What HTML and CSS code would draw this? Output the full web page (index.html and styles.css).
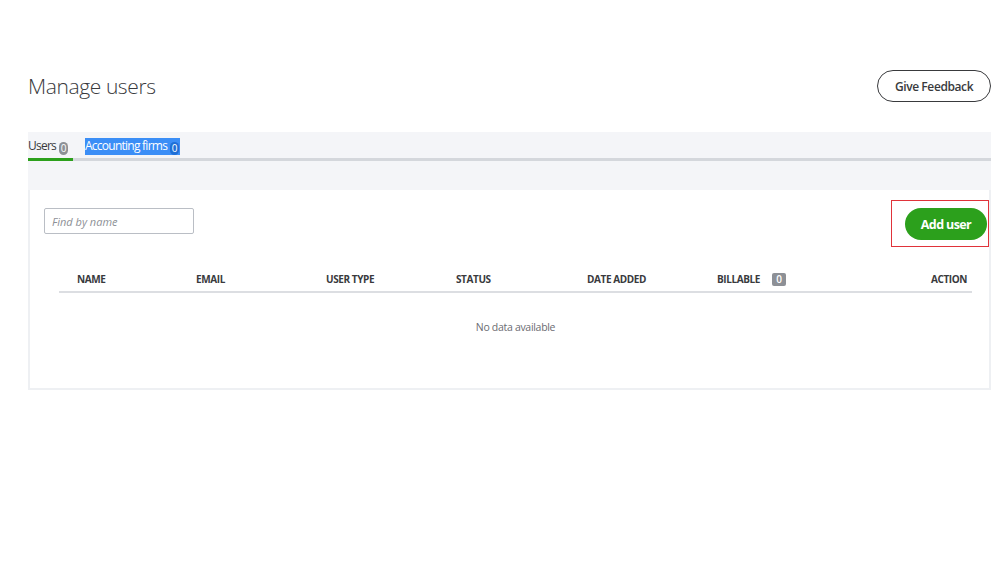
FILE: index.html
```html
<!DOCTYPE html>
<html lang="en">
<head>
    <meta charset="UTF-8">
    <title>Manage users</title>
    <link rel="stylesheet" href="styles.css">
</head>
<body>
    <div class="page">
        <div class="header">
            <h1>Manage users</h1>
            <button class="feedback-button">Give Feedback</button>
        </div>

        <div class="tab-band">
            <div class="tabs">
                <div class="tab active">Users<span class="tab-count">0</span></div>
                <div class="tab"><span class="selected">Accounting firms<span class="tab-count blue">0</span></span></div>
            </div>
        </div>

        <div class="card">
            <div class="toolbar">
                <input type="text" class="search" placeholder="Find by name">
                <div class="highlight-box">
                    <button class="add-button">Add user</button>
                </div>
            </div>

            <div class="table">
                <div class="table-head">
                    <div class="col">NAME</div>
                    <div class="col">EMAIL</div>
                    <div class="col">USER TYPE</div>
                    <div class="col">STATUS</div>
                    <div class="col">DATE ADDED</div>
                    <div class="col billable">BILLABLE <span class="count-badge">0</span><span class="col-action">ACTION</span></div>
                </div>
                <div class="empty">No data available</div>
            </div>
        </div>
    </div>
</body>
</html>
```

FILE: styles.css
```css
body {
    margin: 0;
    font-family: 'Open Sans', 'Liberation Sans', sans-serif;
    color: #393a3d;
    background-color: #ffffff;
}
.page {
    padding: 70px 8px 0 28px;
}
.header {
    display: flex;
    justify-content: space-between;
    align-items: center;
    height: 32px;
}
.header h1 {
    margin: 0;
    font-size: 21px;
    font-weight: 300;
    letter-spacing: -0.4px;
    color: #393a3d;
}
.feedback-button {
    height: 32px;
    width: 114px;
    padding: 0;
    border: 1.5px solid #393a3d;
    border-radius: 16px;
    background-color: #ffffff;
    font-family: inherit;
    font-size: 12px;
    font-weight: 600;
    letter-spacing: -0.4px;
    color: #393a3d;
}
.tab-band {
    margin-top: 30px;
    background-color: #f4f5f8;
    padding-top: 6px;
    height: 52px;
}
.tabs {
    display: flex;
    gap: 12px;
    border-bottom: 3px solid #d4d7dc;
}
.tab {
    font-size: 12px;
    line-height: 16px;
    letter-spacing: -0.75px;
    padding-bottom: 3px;
    margin-bottom: -3px;
    border-bottom: 3px solid transparent;
}
.tab.active {
    width: 45px;
    border-bottom-color: #2ca01c;
}
.tab-count {
    display: inline-block;
    margin-left: 3px;
    width: 9px;
    height: 13px;
    line-height: 13px;
    border-radius: 5px;
    background-color: #8d9096;
    color: #ffffff;
    font-size: 10px;
    text-align: center;
    vertical-align: -2px;
    letter-spacing: 0;
}
.tab-count.blue {
    background-color: #1f6fd6;
}
.selected {
    display: inline-block;
    background-color: #3b8ef6;
    color: #ffffff;
    padding-right: 1px;
}
.card {
    background-color: #ffffff;
    border: 2px solid #eef0f3;
    border-top: none;
    padding: 10px 0 28px 14px;
}
.toolbar {
    display: flex;
    justify-content: space-between;
    align-items: flex-start;
}
.search {
    margin-top: 8px;
    width: 150px;
    height: 26px;
    box-sizing: border-box;
    border: 1px solid #babec5;
    border-radius: 2px;
    padding: 0 7px;
    font-family: inherit;
    font-size: 11px;
}
.search::placeholder {
    color: #8d9096;
    font-style: italic;
}
.highlight-box {
    border: 1px solid #e0333a;
    padding: 7px 1px 6px 13px;
}
.add-button {
    display: block;
    width: 82px;
    height: 32px;
    border: none;
    border-radius: 16px;
    background-color: #2ca01c;
    color: #ffffff;
    font-family: inherit;
    font-size: 12.5px;
    font-weight: 700;
    letter-spacing: -0.6px;
}
.table {
    margin: 20px 17px 0 15px;
}
.table-head {
    display: grid;
    grid-template-columns: 119px 130px 130px 131px 130px 1fr;
    height: 24px;
    align-items: center;
    border-bottom: 2px solid #dcdee2;
    font-size: 10px;
    font-weight: 700;
    letter-spacing: -0.4px;
}
.col {
    padding-left: 18px;
}
.billable {
    display: flex;
    align-items: center;
}
.count-badge {
    display: inline-block;
    margin-left: 12px;
    width: 14px;
    height: 13px;
    line-height: 13px;
    border-radius: 2px;
    background-color: #8d9096;
    color: #ffffff;
    font-size: 10px;
    font-weight: 600;
    text-align: center;
    letter-spacing: 0;
}
.col-action {
    margin-left: auto;
    padding-right: 5px;
}
.empty {
    text-align: center;
    font-size: 10.5px;
    letter-spacing: -0.3px;
    color: #6b6c72;
    padding-top: 27px;
    height: 40px;
}
```
